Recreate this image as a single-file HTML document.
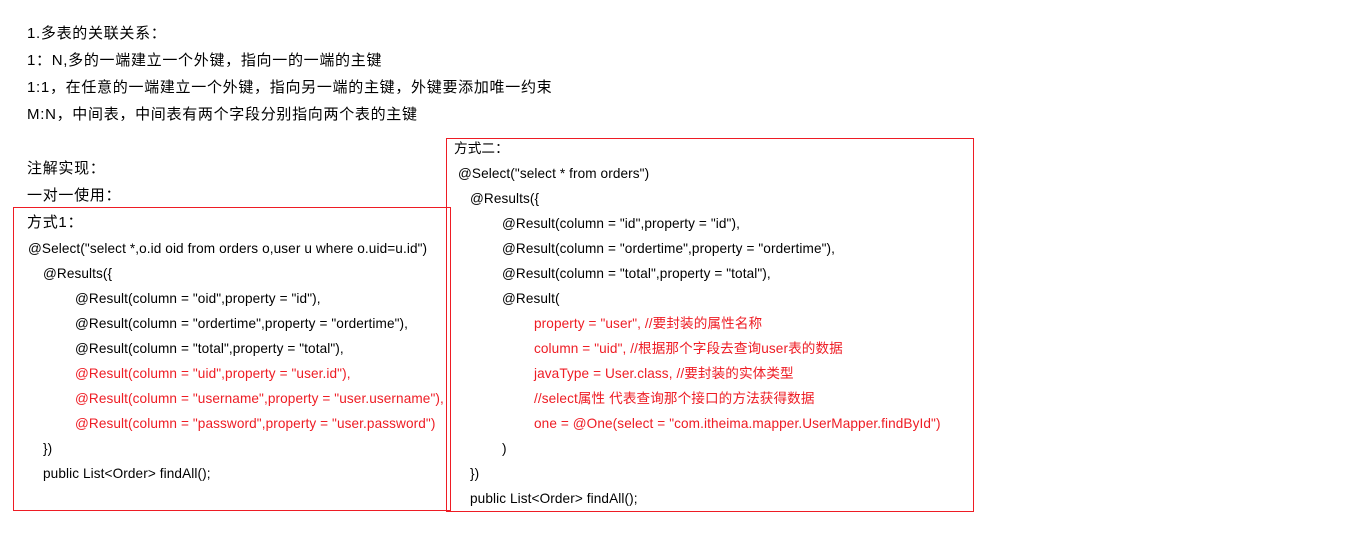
<!DOCTYPE html>
<html><head><meta charset="utf-8"><style>
body{margin:0;width:1355px;height:547px;background:#fff;position:relative;overflow:hidden;font-family:"Liberation Sans","Noto Sans CJK SC",sans-serif;color:#000}
.t{position:absolute;white-space:nowrap;line-height:1;}
.b{font-size:15px;letter-spacing:0.7px}
.c{font-size:13.6px;letter-spacing:0.1px}
.r{color:#ee1c24}
.box{position:absolute;border:1px solid #ee1c24}
</style></head><body>
<div class="t b" style="left:27px;top:26px">1.多表的关联关系：</div>
<div class="t b" style="left:27px;top:53px">1：N,多的一端建立一个外键，指向一的一端的主键</div>
<div class="t b" style="left:27px;top:80px">1:1，在任意的一端建立一个外键，指向另一端的主键，外键要添加唯一约束</div>
<div class="t b" style="left:27px;top:107px">M:N，中间表，中间表有两个字段分别指向两个表的主键</div>
<div class="t b" style="left:27px;top:161px">注解实现：</div>
<div class="t b" style="left:27px;top:188px">一对一使用：</div>

<div class="box" style="left:13px;top:207px;width:436px;height:302px"></div>
<div class="t b" style="left:27px;top:215px">方式1：</div>
<div class="t c" style="left:28px;top:242px">@Select("select *,o.id oid from orders o,user u where o.uid=u.id")</div>
<div class="t c" style="left:43px;top:267px">@Results({</div>
<div class="t c" style="left:75px;top:292px">@Result(column = "oid",property = "id"),</div>
<div class="t c" style="left:75px;top:317px">@Result(column = "ordertime",property = "ordertime"),</div>
<div class="t c" style="left:75px;top:342px">@Result(column = "total",property = "total"),</div>
<div class="t c r" style="left:75px;top:367px">@Result(column = "uid",property = "user.id"),</div>
<div class="t c r" style="left:75px;top:392px">@Result(column = "username",property = "user.username"),</div>
<div class="t c r" style="left:75px;top:417px">@Result(column = "password",property = "user.password")</div>
<div class="t c" style="left:43px;top:442px">})</div>
<div class="t c" style="left:43px;top:467px">public List&lt;Order&gt; findAll();</div>

<div class="box" style="left:446px;top:138px;width:526px;height:372px;background:transparent"></div>
<div class="t c" style="left:454px;top:142px">方式二：</div>
<div class="t c" style="left:458px;top:167px">@Select("select * from orders")</div>
<div class="t c" style="left:470px;top:192px">@Results({</div>
<div class="t c" style="left:502px;top:217px">@Result(column = "id",property = "id"),</div>
<div class="t c" style="left:502px;top:242px">@Result(column = "ordertime",property = "ordertime"),</div>
<div class="t c" style="left:502px;top:267px">@Result(column = "total",property = "total"),</div>
<div class="t c" style="left:502px;top:292px">@Result(</div>
<div class="t c r" style="left:534px;top:317px">property = "user", //要封装的属性名称</div>
<div class="t c r" style="left:534px;top:342px">column = "uid", //根据那个字段去查询user表的数据</div>
<div class="t c r" style="left:534px;top:367px">javaType = User.class, //要封装的实体类型</div>
<div class="t c r" style="left:534px;top:392px">//select属性 代表查询那个接口的方法获得数据</div>
<div class="t c r" style="left:534px;top:417px">one = @One(select = "com.itheima.mapper.UserMapper.findById")</div>
<div class="t c" style="left:502px;top:442px">)</div>
<div class="t c" style="left:470px;top:467px">})</div>
<div class="t c" style="left:470px;top:492px">public List&lt;Order&gt; findAll();</div>
</body></html>
